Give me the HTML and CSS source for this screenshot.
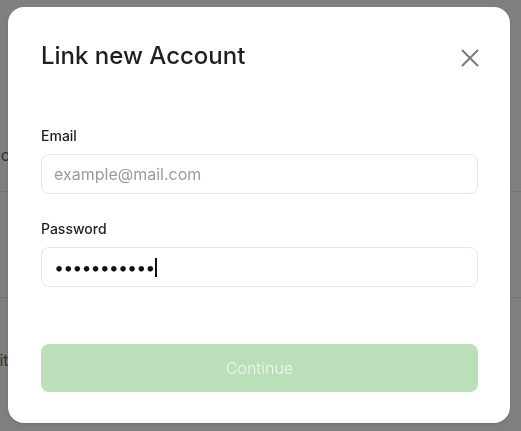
FILE: index.html
```html
<!DOCTYPE html>
<html lang="en">
<head>
<meta charset="utf-8">
<title>Link new Account</title>
<link rel="stylesheet" href="styles.css">
</head>
<body>
<div class="page">
  <div class="page-row page-row-top"><span class="page-text">Vendor</span></div>
  <div class="page-row page-row-mid"></div>
  <div class="page-row page-row-bottom"><span class="page-text">Edit</span></div>
</div>
<div class="overlay">
  <div class="modal" role="dialog" aria-labelledby="modal-title">
    <div class="modal-header">
      <h1 class="modal-title" id="modal-title">Link new Account</h1>
      <button class="close-btn" aria-label="Close">
        <svg width="18" height="18" viewBox="0 0 18 18" fill="none" stroke="currentColor" stroke-width="1.9" stroke-linecap="round">
          <path d="M1.5 1.5L16.5 16.5M16.5 1.5L1.5 16.5"/>
        </svg>
      </button>
    </div>
    <form class="modal-form">
      <div class="field">
        <label class="field-label" for="email">Email</label>
        <input class="field-input" id="email" type="email" placeholder="example@mail.com">
      </div>
      <div class="field">
        <label class="field-label" for="password">Password</label>
        <div class="field-input field-password" id="password"><span class="dots">•••••••••••</span><span class="caret"></span></div>
      </div>
      <button type="button" class="continue-btn">Continue</button>
    </form>
  </div>
</div>
</body>
</html>
```

FILE: styles.css
```css
* { box-sizing: border-box; }

html, body {
  margin: 0;
  padding: 0;
  width: 521px;
  height: 431px;
  overflow: hidden;
}

body {
  font-family: Inter, "Liberation Sans", sans-serif;
  background: #ffffff;
  color: #1f1f1f;
}

.page {
  width: 521px;
  height: 431px;
}

.page-row {
  border-bottom: 1px solid #e8e8e8;
  font-size: 16px;
  line-height: 20px;
  color: #666;
  display: flex;
}

.page-row-top {
  height: 192px;
  align-items: flex-start;
  padding-top: 145px;
}

.page-row-mid {
  height: 106px;
}

.page-row-bottom {
  height: 133px;
  align-items: flex-start;
  padding-top: 52px;
  border-bottom: none;
}

.page-row-top .page-text {
  margin-left: -38px;
}

.page-row-bottom .page-text {
  margin-left: -20px;
}

.overlay {
  position: fixed;
  inset: 0;
  background: rgba(0, 0, 0, 0.5);
  padding: 7px 11px 8px 8px;
}

.modal {
  width: 502px;
  height: 416px;
  background: #ffffff;
  border-radius: 16px;
  padding: 33px 32px 31px 33px;
  box-shadow: 0 1px 3px rgba(0, 0, 0, 0.15);
}

.modal-header {
  display: flex;
  justify-content: space-between;
  align-items: center;
  height: 32px;
}

.modal-title {
  margin: 0;
  font-size: 24px;
  line-height: 32px;
  font-weight: 500;
  color: #1f1f1f;
  letter-spacing: 0;
}

.close-btn {
  border: none;
  background: none;
  padding: 0;
  width: 18px;
  height: 18px;
  color: #777777;
  display: flex;
  align-items: center;
  justify-content: center;
  margin-right: -1px;
  margin-top: 3px;
}

.modal-form {
  margin-top: 54px;
  display: flex;
  flex-direction: column;
}

.field {
  display: flex;
  flex-direction: column;
  gap: 8px;
  margin-bottom: 25px;
}

.field + .field {
  margin-bottom: 57px;
}

.field-label {
  font-size: 14px;
  line-height: 20px;
  font-weight: 500;
  color: #1f1f1f;
}

.field-input {
  height: 40px;
  width: 100%;
  border: 1px solid #e6e6e6;
  border-radius: 8px;
  padding: 0 12px;
  font-family: Inter, "Liberation Sans", sans-serif;
  font-size: 16px;
  color: #1f1f1f;
  background: #ffffff;
  outline: none;
}

.field-input::placeholder {
  color: #9b9b9b;
}

.field-password {
  display: flex;
  align-items: center;
}

.dots {
  font-size: 18px;
  letter-spacing: -1px;
  color: #111;
}

.caret {
  width: 1.5px;
  height: 19px;
  background: #111;
  margin-left: 1px;
}

.continue-btn {
  height: 48px;
  width: 100%;
  border: none;
  border-radius: 8px;
  background: #bbe0b9;
  color: rgba(255, 255, 255, 0.75);
  font-family: Inter, "Liberation Sans", sans-serif;
  font-size: 16px;
  font-weight: 300;
}
```
